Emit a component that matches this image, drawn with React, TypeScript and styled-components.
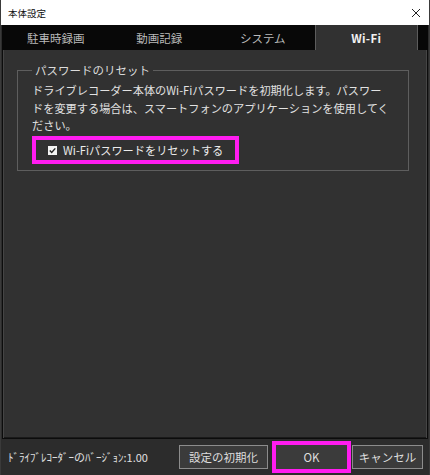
import React from "react";
import styled, { createGlobalStyle } from "styled-components";

const Global = createGlobalStyle`
  html, body { margin: 0; padding: 0; background: #2c2c2c; }
  body { font-family: "Noto Sans CJK JP", "Noto Sans", sans-serif; }
  * { box-sizing: border-box; }
`;

const Window = styled.div`
  width: 430px;
  height: 475px;
  display: flex;
  flex-direction: column;
  background: #2c2c2c;
  border-left: 1px solid #3a3a3a;
  border-right: 1px solid #3a3a3a;
  overflow: hidden;
`;

const TitleBar = styled.div`
  height: 25px;
  flex: none;
  background: #ffffff;
  display: flex;
  align-items: center;
  justify-content: space-between;
  padding: 0 8px 0 7px;
  font-size: 9.5px;
  color: #111;
`;

const CloseIcon = styled.svg`
  width: 10px;
  height: 10px;
  display: block;
`;

const Body = styled.div`
  flex: 1;
  display: flex;
  flex-direction: column;
  padding: 0 1px 0 1px;
`;

const TabBar = styled.div`
  height: 25px;
  flex: none;
  background: #080808;
  display: grid;
  grid-template-columns: repeat(4, 103.5px);
  padding-left: 2px;
`;

const Tab = styled.div<{ $active?: boolean }>`
  display: flex;
  align-items: center;
  justify-content: center;
  font-size: 11.5px;
  color: ${(p) => (p.$active ? "#f2f2f2" : "#b9b9b9")};
  font-weight: ${(p) => (p.$active ? 600 : 400)};
  background: ${(p) => (p.$active ? "#313131" : "transparent")};
  border-left: 1px solid ${(p) => (p.$active ? "#5c5c5c" : "transparent")};
  border-right: 1px solid ${(p) => (p.$active ? "#5c5c5c" : "transparent")};
  letter-spacing: ${(p) => (p.$active ? "0.3px" : "0")};
`;

const Panel = styled.div`
  height: 389px;
  flex: none;
  background: #313131;
  border: 1px solid #0c0c0c;
  border-top: none;
  box-shadow: inset 1px 0 0 #454545, inset -1px 0 0 #454545, inset 0 -1px 0 #1a1a1a;
  padding: 12px 18px 0 14px;
`;

const Group = styled.fieldset`
  margin: 0;
  padding: 0 14px 6px 14px;
  border: 1px solid #5e5e5e;
  min-width: 0;
`;

const Legend = styled.legend`
  padding: 0 3px;
  font-size: 11.5px;
  line-height: 16px;
  color: #dcdcdc;
`;

const Description = styled.p`
  margin: 4px 0 0 0;
  font-size: 11.2px;
  line-height: 17.5px;
  color: #e2e2e2;
  white-space: nowrap;
`;

const Highlight = styled.div<{ $w: number; $h: number }>`
  width: ${(p) => p.$w}px;
  height: ${(p) => p.$h}px;
  border: 4px solid #ff1cf0;
  display: flex;
  align-items: center;
  justify-content: center;
`;

const CheckRow = styled.div`
  margin-top: 1.5px;
  width: 207px;
  height: 28px;
  border: 4px solid #ff1cf0;
  display: flex;
  align-items: center;
  padding-left: 12px;
  gap: 6px;
  font-size: 11.2px;
  color: #ececec;
`;

const CheckBox = styled.svg`
  width: 9px;
  height: 9px;
  display: block;
  flex: none;
`;

const Footer = styled.div`
  flex: 1;
  display: flex;
  align-items: center;
  padding: 0 0 0 6px;
`;

const Version = styled.div`
  flex: 1;
  font-size: 11px;
  color: #e0e0e0;
  white-space: nowrap;
`;

const Button = styled.div<{ $w: number; $plain?: boolean }>`
  width: ${(p) => p.$w}px;
  height: ${(p) => (p.$plain ? "100%" : "24px")};
  display: flex;
  align-items: center;
  justify-content: center;
  background: #3b3b3b;
  border: ${(p) => (p.$plain ? "none" : "1px solid #8c8c8c")};
  font-size: 11.5px;
  color: #dedede;
`;

const ButtonSlot = styled.div<{ $ml: number }>`
  margin-left: ${(p) => p.$ml}px;
  display: flex;
`;

export default function App() {
  return (
    <>
      <Global />
      <Window>
        <TitleBar>
          <span>本体設定</span>
          <CloseIcon viewBox="0 0 10 10">
            <path d="M1 1 L9 9 M9 1 L1 9" stroke="#222" strokeWidth="1" fill="none" />
          </CloseIcon>
        </TitleBar>
        <Body>
          <TabBar>
            <Tab>駐車時録画</Tab>
            <Tab>動画記録</Tab>
            <Tab>システム</Tab>
            <Tab $active>Wi-Fi</Tab>
          </TabBar>
          <Panel>
            <Group>
              <Legend>パスワードのリセット</Legend>
              <Description>
                ドライブレコーダー本体のWi-Fiパスワードを初期化します。パスワー
                <br />
                ドを変更する場合は、スマートフォンのアプリケーションを使用してく
                <br />
                ださい。
              </Description>
              <CheckRow>
                <CheckBox viewBox="0 0 9 9">
                  <rect x="0" y="0" width="9" height="9" fill="#f4f4f4" />
                  <path d="M1.8 4.6 L3.7 6.5 L7.3 2.4" stroke="#222" strokeWidth="1.4" fill="none" />
                </CheckBox>
                <span>Wi-Fiパスワードをリセットする</span>
              </CheckRow>
            </Group>
          </Panel>
          <Footer>
            <Version>ﾄﾞﾗｲﾌﾞﾚｺｰﾀﾞｰのﾊﾞｰｼﾞｮﾝ:1.00</Version>
            <ButtonSlot $ml={0}>
              <Button $w={89}>設定の初期化</Button>
            </ButtonSlot>
            <ButtonSlot $ml={4}>
              <Highlight $w={79} $h={32}>
                <Button $w={71} $plain>OK</Button>
              </Highlight>
            </ButtonSlot>
            <ButtonSlot $ml={1}>
              <Button $w={71}>キャンセル</Button>
            </ButtonSlot>
            <ButtonSlot $ml={5}>
              <span />
            </ButtonSlot>
          </Footer>
        </Body>
      </Window>
    </>
  );
}
